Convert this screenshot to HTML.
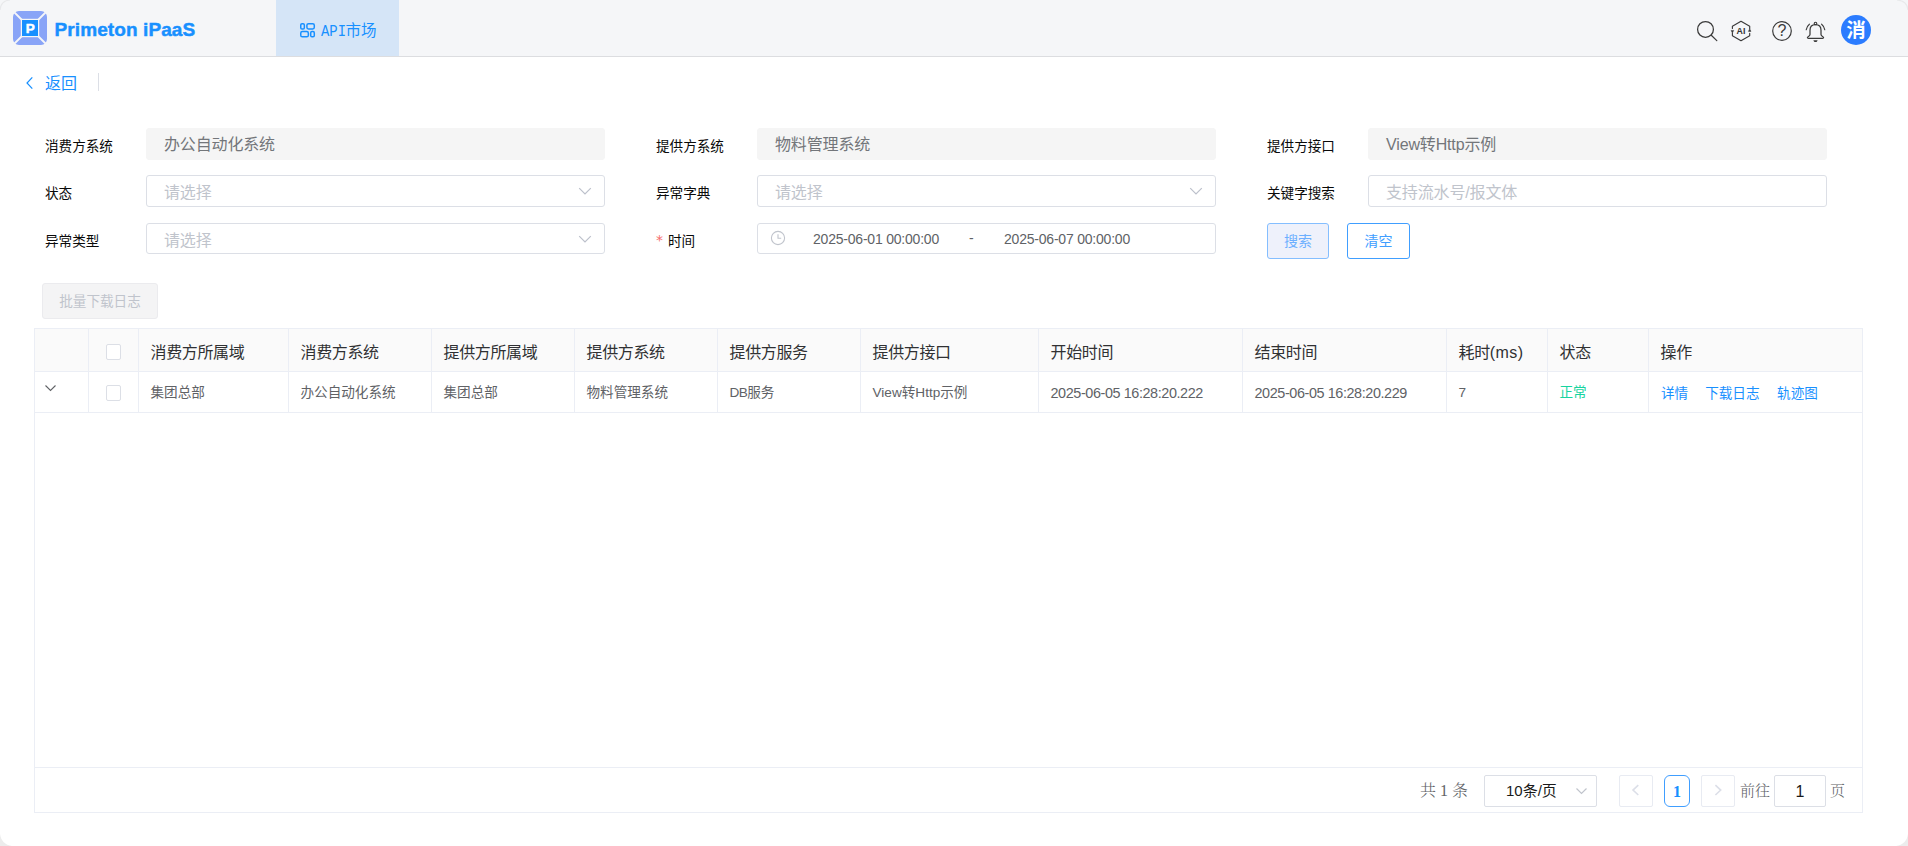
<!DOCTYPE html>
<html lang="zh-CN">
<head>
<meta charset="utf-8">
<title>Primeton iPaaS</title>
<style>
*{box-sizing:border-box;margin:0;padding:0}
html,body{width:1908px;height:846px;overflow:hidden;background:#fff}
body{font-family:"Liberation Sans","Noto Sans CJK SC",sans-serif;color:#606266;position:relative}
.abs{position:absolute}
/* header */
#hdr{position:absolute;left:0;top:0;width:1908px;height:57px;background:#f5f6f8;border-bottom:1px solid #dcdde0}
#brand{position:absolute;left:54.5px;top:17.5px;font-size:19px;font-weight:bold;color:#1890ff;line-height:24px;white-space:nowrap;letter-spacing:0.1px;-webkit-text-stroke:0.45px #1890ff}
#tab{position:absolute;left:276px;top:0;width:123px;height:56px;background:#d5e5f7}
#tab span{position:absolute;left:45px;top:19.5px;font-size:15.5px;line-height:22px;color:#1890ff;white-space:nowrap}
/* back */
#back{position:absolute;left:45px;top:73px;font-size:16px;line-height:22px;color:#1890ff}
#backdiv{position:absolute;left:98px;top:73px;width:1px;height:18px;background:#dcdfe6}
/* form */
.lbl{position:absolute;font-size:13.6px;line-height:20px;color:#0a0a0a;white-space:nowrap}
.inp{position:absolute;height:32px;border:1px solid #dcdfe6;border-radius:3px;background:#fff;font-size:16px;line-height:30px;color:#c0c4cc;padding-left:17px;padding-top:2px;white-space:nowrap;letter-spacing:-0.15px}
.inp.dis{background:#f5f5f5;border-color:#f5f5f5;color:#73767a;padding-top:1px}
.btn{position:absolute;height:36px;border:1px solid;border-radius:3px;font-size:14px;line-height:35px;text-align:center;white-space:nowrap}
/* table */
#tbl{position:absolute;left:34px;top:328px;width:1829px;height:485px;border:1px solid #ebeef5}
.th,.td{position:absolute;white-space:nowrap}
.th{font-size:16px;line-height:22px;color:#303133;top:341.5px;letter-spacing:-0.35px}
.td{font-size:13.6px;line-height:20px;color:#606266;top:382.5px}
.vl{position:absolute;width:1px;background:#ebeef5;top:329px;height:83px}
.cb{position:absolute;width:15px;height:16px;border:1px solid #dcdfe6;border-radius:2px;background:#fff}
.serif{font-family:"Liberation Serif","Noto Serif CJK SC",serif}
.pg{position:absolute;top:775px;height:32px;border:1px solid #dcdfe6;border-radius:2px;background:#fff}
</style>
</head>
<body>
<div id="hdr"></div>
<div id="tab"><span><i style="font-style:normal;font-family:'Liberation Mono',monospace;font-size:17px;display:inline-block;transform:scaleX(0.82);transform-origin:0 50%;margin-right:-6.1px">API</i>市场</span></div>
<div id="brand">Primeton iPaaS</div>
<div id="back">返回</div>
<div id="backdiv"></div>

<!-- form labels -->
<div class="lbl" style="left:45px;top:136.5px">消费方系统</div>
<div class="lbl" style="left:45px;top:183.5px">状态</div>
<div class="lbl" style="left:45px;top:231.5px">异常类型</div>
<div class="lbl" style="left:656px;top:136.5px">提供方系统</div>
<div class="lbl" style="left:656px;top:183.5px">异常字典</div>
<div class="lbl" style="left:656px;top:231.5px"><span style="color:#f56c6c;font-family:'DejaVu Sans',sans-serif;font-size:14px;position:absolute;left:0px;top:-1.5px">*</span><span style="margin-left:12px">时间</span></div>
<div class="lbl" style="left:1267px;top:136.5px">提供方接口</div>
<div class="lbl" style="left:1267px;top:183.5px">关键字搜索</div>

<div class="inp dis" style="left:146px;top:128px;width:459px">办公自动化系统</div>
<div class="inp" style="left:146px;top:175px;width:459px">请选择</div>
<div class="inp" style="left:146px;top:223px;width:459px;height:31px">请选择</div>
<div class="inp dis" style="left:757px;top:128px;width:459px">物料管理系统</div>
<div class="inp" style="left:757px;top:175px;width:459px">请选择</div>
<div class="inp" style="left:757px;top:223px;width:459px;height:31px"></div>
<div class="inp dis" style="left:1368px;top:128px;width:459px">View转Http示例</div>
<div class="inp" style="left:1368px;top:175px;width:459px">支持流水号/报文体</div>

<div class="abs" style="left:813px;top:229px;font-size:14px;letter-spacing:-0.21px;line-height:20px;color:#606266;white-space:nowrap">2025-06-01 00:00:00</div>
<div class="abs" style="left:969px;top:228px;font-size:14px;line-height:20px;color:#606266">-</div>
<div class="abs" style="left:1004px;top:229px;font-size:14px;letter-spacing:-0.21px;line-height:20px;color:#606266;white-space:nowrap">2025-06-07 00:00:00</div>

<div class="btn" style="left:1267px;top:223px;width:62px;background:#eef1fb;border-color:#84beff;color:#6cafff">搜索</div>
<div class="btn" style="left:1347px;top:223px;width:63px;background:#fff;border-color:#409eff;color:#409eff">清空</div>
<div class="btn" style="left:42px;top:283px;width:116px;background:#f4f4f5;border-color:#ebebee;color:#c0c4cc;font-size:13.6px;line-height:35.5px">批量下载日志</div>

<!-- table -->
<div id="tbl"></div>
<div class="abs" style="left:35px;top:329px;width:1827px;height:43px;background:#fafafa"></div>
<div class="abs" style="left:35px;top:371px;width:1827px;height:1px;background:#ebeef5"></div>
<div class="abs" style="left:35px;top:412px;width:1827px;height:1px;background:#ebeef5"></div>
<div class="abs" style="left:35px;top:767px;width:1827px;height:1px;background:#ebeef5"></div>

<div class="vl" style="left:88px"></div>
<div class="vl" style="left:138px"></div>
<div class="vl" style="left:288px"></div>
<div class="vl" style="left:431px"></div>
<div class="vl" style="left:574px"></div>
<div class="vl" style="left:717px"></div>
<div class="vl" style="left:860px"></div>
<div class="vl" style="left:1038px"></div>
<div class="vl" style="left:1242px"></div>
<div class="vl" style="left:1446px"></div>
<div class="vl" style="left:1547px"></div>
<div class="vl" style="left:1648px"></div>
<div class="th" style="left:150.5px">消费方所属域</div>
<div class="td" style="left:150.5px">集团总部</div>
<div class="th" style="left:300.5px">消费方系统</div>
<div class="td" style="left:300.5px">办公自动化系统</div>
<div class="th" style="left:443.5px">提供方所属域</div>
<div class="td" style="left:443.5px">集团总部</div>
<div class="th" style="left:586.5px">提供方系统</div>
<div class="td" style="left:586.5px">物料管理系统</div>
<div class="th" style="left:729.5px">提供方服务</div>
<div class="td" style="left:729.5px"><span style="letter-spacing:-0.6px">DB</span>服务</div>
<div class="th" style="left:872.5px">提供方接口</div>
<div class="td" style="left:872.5px">View转Http示例</div>
<div class="th" style="left:1050.5px">开始时间</div>
<div class="td" style="left:1050.5px"><span style="font-size:14.4px;letter-spacing:-0.4px">2025-06-05 16:28:20.222</span></div>
<div class="th" style="left:1254.5px">结束时间</div>
<div class="td" style="left:1254.5px"><span style="font-size:14.4px;letter-spacing:-0.4px">2025-06-05 16:28:20.229</span></div>
<div class="th" style="left:1458.5px">耗时<span style="letter-spacing:0.45px">(ms)</span></div>
<div class="td" style="left:1458.5px">7</div>
<div class="th" style="left:1559.5px">状态</div>
<div class="td" style="left:1559.5px"><span style="color:#16d4a0">正常</span></div>
<div class="th" style="left:1660.5px">操作</div>
<div class="td" style="left:1660.5px"><span style="color:#1890ff;position:relative;top:1px;left:0.5px">详情</span><span style="color:#1890ff;margin-left:17.5px;position:relative;top:1px">下载日志</span><span style="color:#1890ff;margin-left:17.5px;position:relative;top:1px">轨迹图</span></div>
<div class="cb" style="left:106px;top:344px"></div>
<div class="cb" style="left:106px;top:385px"></div>
<svg class="abs" style="left:44px;top:383px" width="14" height="10" viewBox="0 0 14 10"><path d="M1.5 2.5 L6.5 7.5 L11.5 2.5" fill="none" stroke="#606266" stroke-width="1.1"/></svg>

<svg class="abs" style="left:12px;top:10px" width="36" height="36" viewBox="0 0 36 36">
<rect x="1" y="1" width="34" height="34" rx="6" fill="#89a4f7"/>
<path d="M1.5 1.5 L34.5 34.5 M34.5 1.5 L1.5 34.5" stroke="#f5f6f8" stroke-width="1.8"/>
<rect x="8.8" y="8.8" width="18.4" height="18.4" fill="#f5f6f8"/>
<rect x="10" y="10" width="16" height="16" fill="#1890ff"/>
<text x="18.2" y="23" font-family="Liberation Sans, sans-serif" font-weight="bold" font-size="13.5" fill="#fff" stroke="#fff" stroke-width="0.5" text-anchor="middle">P</text>
</svg>
<svg class="abs" style="left:299px;top:22px" width="18" height="17" viewBox="0 0 18 17">
<g fill="none" stroke="#1890ff" stroke-width="1.5">
<rect x="1.75" y="1.75" width="3.6" height="5.2" rx="1.3"/>
<rect x="7.9" y="1.75" width="7.4" height="5.2" rx="1.6"/>
<rect x="1.75" y="9.6" width="7.6" height="5.2" rx="1.6"/>
<rect x="11.7" y="9.6" width="3.6" height="5.2" rx="1.3"/>
</g></svg>
<svg class="abs" style="left:24px;top:75px" width="12" height="16" viewBox="0 0 12 16"><path d="M8.3 2.3 L3 8 L8.3 13.7" fill="none" stroke="#1890ff" stroke-width="1.2"/></svg>
<svg class="abs" style="left:1690px;top:10px" width="190" height="40" viewBox="1690 10 190 40">
<g fill="none" stroke="#3a3a3a" stroke-width="1.25" stroke-linecap="round" stroke-linejoin="round">
<circle cx="1705.5" cy="29.4" r="7.9"/>
<path d="M1711.3 35.2 L1716.8 40.6"/>
<path d="M1749.7 28.4 V26.2 L1741 21.3 L1732.4 26.2 V28.4 M1732.4 33 V35.8 L1741 40.7 L1749.7 35.8 V33.2" stroke-width="1.15"/>
<circle cx="1782" cy="31" r="9.3" stroke-width="1.2"/>
<circle cx="1815.5" cy="23.5" r="1.3" stroke-width="1.1"/>
<path d="M1810 34.6 V30.2 C1810 26.6 1812.4 24.7 1815.5 24.7 C1818.6 24.7 1821 26.6 1821 30.2 V34.6 C1821 36.4 1823.8 36.6 1823.6 37.7 C1823.5 38.2 1823.2 38.3 1822.6 38.3 H1808.4 C1807.8 38.3 1807.5 38.2 1807.4 37.7 C1807.2 36.6 1810 36.4 1810 34.6 Z" stroke-width="1.25"/>
<path d="M1809.4 24.2 C1807.6 25.6 1806.6 27.6 1806.2 29.8 M1821.6 24.2 C1823.4 25.6 1824.4 27.6 1824.8 29.8" stroke-width="1.1"/>
</g>
<path d="M1813.4 40.2 H1817.6 C1817.3 41.5 1816.5 42 1815.5 42 C1814.5 42 1813.7 41.5 1813.4 40.2 Z" fill="#3a3a3a"/>
<path d="M1748.4 31.4 L1749.7 28.8 L1751 31.4 Z M1731.1 30.4 L1732.4 33 L1733.7 30.4 Z" fill="#3a3a3a" stroke="#3a3a3a" stroke-width="0.5" stroke-linejoin="round"/>
<text x="1741" y="34.1" font-family="Liberation Sans, sans-serif" font-weight="bold" font-size="8.8" fill="#333" text-anchor="middle">AI</text>
<text x="1782" y="36.4" font-family="Liberation Sans, sans-serif" font-size="16" fill="#3a3a3a" text-anchor="middle">?</text>
<circle cx="1856" cy="30" r="15" fill="#2b7cff"/>
<text x="1856" y="37" font-family="Liberation Sans, Noto Sans CJK SC, sans-serif" font-weight="bold" font-size="19.5" fill="#fff" text-anchor="middle">消</text>
</svg>
<svg class="abs" style="left:578px;top:187px" width="14" height="9" viewBox="0 0 14 9"><path d="M1.2 1.2 L7 7 L12.8 1.2" fill="none" stroke="#bcc0cb" stroke-width="1.2"/></svg>
<svg class="abs" style="left:578px;top:235px" width="14" height="9" viewBox="0 0 14 9"><path d="M1.2 1.2 L7 7 L12.8 1.2" fill="none" stroke="#bcc0cb" stroke-width="1.2"/></svg>
<svg class="abs" style="left:1189px;top:187px" width="14" height="9" viewBox="0 0 14 9"><path d="M1.2 1.2 L7 7 L12.8 1.2" fill="none" stroke="#bcc0cb" stroke-width="1.2"/></svg>
<svg class="abs" style="left:770px;top:230px" width="16" height="16" viewBox="0 0 16 16"><circle cx="8" cy="8" r="6.6" fill="none" stroke="#c0c4cc" stroke-width="1.1"/><path d="M8 4.2 V8.3 H11.2" fill="none" stroke="#c0c4cc" stroke-width="1.1"/></svg>
<div class="abs serif" style="left:1420px;top:780px;font-size:16px;line-height:22px;color:#606266;white-space:nowrap;font-weight:300"><span>共</span><span style="display:inline-block;width:16px;text-align:center">1</span><span>条</span></div>
<div class="pg" style="left:1484px;width:113px"></div>
<div class="abs" style="left:1506px;top:780px;font-size:15px;line-height:22px;color:#1a1a1a;white-space:nowrap">10条/页</div>
<svg class="abs" style="left:1575px;top:787px" width="13" height="9" viewBox="0 0 13 9"><path d="M1.5 1.5 L6.5 6.5 L11.5 1.5" fill="none" stroke="#c0c4cc" stroke-width="1.2"/></svg>
<div class="pg" style="left:1619px;width:34px;border-color:#e8ebf2"></div>
<svg class="abs" style="left:1630px;top:782px" width="12" height="16" viewBox="0 0 12 16"><path d="M8.3 3.2 L3 8.1 L8.3 13" fill="none" stroke="#dcdfe8" stroke-width="1.6"/></svg>
<div class="pg serif" style="left:1664px;width:26px;border-color:#409eff;border-radius:6px;color:#1890ff;font-weight:bold;font-size:16px;line-height:31px;text-align:center">1</div>
<div class="pg" style="left:1701px;width:34px;border-color:#e8ebf2"></div>
<svg class="abs" style="left:1712px;top:782px" width="12" height="16" viewBox="0 0 12 16"><path d="M3.4 3.2 L8.7 8.1 L3.4 13" fill="none" stroke="#dcdfe8" stroke-width="1.6"/></svg>
<div class="abs serif" style="left:1740px;top:780px;font-size:15px;line-height:22px;color:#606266;white-space:nowrap;font-weight:300">前往</div>
<div class="pg" style="left:1774px;width:52px;font-size:16px;line-height:31px;text-align:center;color:#1a1a1a">1</div>
<div class="abs serif" style="left:1830px;top:780px;font-size:15px;line-height:22px;color:#606266;white-space:nowrap;font-weight:300">页</div>
<svg class="abs" style="left:0;top:0;pointer-events:none" width="1908" height="846" viewBox="0 0 1908 846">
<path d="M0 10 C0.5 4 4 0.5 10 0" fill="none" stroke="#e8e9eb" stroke-width="1.2"/>
<path d="M1897 0 C1903 0.5 1907.5 4 1908 10" fill="none" stroke="#e8e9eb" stroke-width="1.2"/>
<path d="M0 834 C1 841 5 845 12 846 H0 Z" fill="#ececec"/>
<path d="M1908 834 C1907 841 1903 845 1896 846 H1908 Z" fill="#ececec"/>
</svg>

</body>
</html>
